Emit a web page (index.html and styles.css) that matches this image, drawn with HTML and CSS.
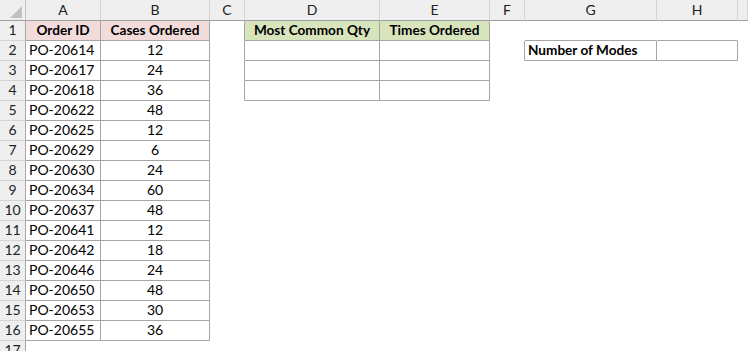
FILE: index.html
```html
<!DOCTYPE html>
<html>
<head>
<meta charset="utf-8">
<link rel="stylesheet" href="styles.css">
</head>
<body>
<div class="sheet">
  <div class="row hdr">
    <div class="corner"><span class="tri"></span></div>
    <div class="ch">A</div><div class="ch">B</div><div class="ch">C</div><div class="ch">D</div><div class="ch">E</div><div class="ch">F</div><div class="ch">G</div><div class="ch">H</div><div class="ch"></div>
  </div>
  <div class="row">
    <div class="rh">1</div>
    <div class="c r b pink hd">Order ID</div><div class="c r b pink hd">Cases Ordered</div><div class="c r"></div>
    <div class="c r b green hd">Most Common Qty</div><div class="c r b green hd">Times Ordered</div><div class="c"></div>
    <div class="c b"></div><div class="c b"></div><div class="c"></div>
  </div>
  <div class="row">
    <div class="rh">2</div>
    <div class="c r b txt">PO-20614</div><div class="c r b num">12</div><div class="c r"></div>
    <div class="c r b"></div><div class="c r b"></div><div class="c r"></div>
    <div class="c r b hd lbl">Number of Modes</div><div class="c r b"></div><div class="c"></div>
  </div>
  <div class="row">
    <div class="rh">3</div>
    <div class="c r b txt">PO-20617</div><div class="c r b num">24</div><div class="c r"></div>
    <div class="c r b"></div><div class="c r b"></div><div class="c"></div>
    <div class="c"></div><div class="c"></div><div class="c"></div>
  </div>
  <div class="row">
    <div class="rh">4</div>
    <div class="c r b txt">PO-20618</div><div class="c r b num">36</div><div class="c r"></div>
    <div class="c r b"></div><div class="c r b"></div><div class="c"></div>
    <div class="c"></div><div class="c"></div><div class="c"></div>
  </div>
  <div class="row">
    <div class="rh">5</div>
    <div class="c r b txt">PO-20622</div><div class="c r b num">48</div><div class="c"></div>
    <div class="c"></div><div class="c"></div><div class="c"></div><div class="c"></div><div class="c"></div><div class="c"></div>
  </div>
  <div class="row">
    <div class="rh">6</div>
    <div class="c r b txt">PO-20625</div><div class="c r b num">12</div><div class="c"></div>
    <div class="c"></div><div class="c"></div><div class="c"></div><div class="c"></div><div class="c"></div><div class="c"></div>
  </div>
  <div class="row">
    <div class="rh">7</div>
    <div class="c r b txt">PO-20629</div><div class="c r b num">6</div><div class="c"></div>
    <div class="c"></div><div class="c"></div><div class="c"></div><div class="c"></div><div class="c"></div><div class="c"></div>
  </div>
  <div class="row">
    <div class="rh">8</div>
    <div class="c r b txt">PO-20630</div><div class="c r b num">24</div><div class="c"></div>
    <div class="c"></div><div class="c"></div><div class="c"></div><div class="c"></div><div class="c"></div><div class="c"></div>
  </div>
  <div class="row">
    <div class="rh">9</div>
    <div class="c r b txt">PO-20634</div><div class="c r b num">60</div><div class="c"></div>
    <div class="c"></div><div class="c"></div><div class="c"></div><div class="c"></div><div class="c"></div><div class="c"></div>
  </div>
  <div class="row">
    <div class="rh">10</div>
    <div class="c r b txt">PO-20637</div><div class="c r b num">48</div><div class="c"></div>
    <div class="c"></div><div class="c"></div><div class="c"></div><div class="c"></div><div class="c"></div><div class="c"></div>
  </div>
  <div class="row">
    <div class="rh">11</div>
    <div class="c r b txt">PO-20641</div><div class="c r b num">12</div><div class="c"></div>
    <div class="c"></div><div class="c"></div><div class="c"></div><div class="c"></div><div class="c"></div><div class="c"></div>
  </div>
  <div class="row">
    <div class="rh">12</div>
    <div class="c r b txt">PO-20642</div><div class="c r b num">18</div><div class="c"></div>
    <div class="c"></div><div class="c"></div><div class="c"></div><div class="c"></div><div class="c"></div><div class="c"></div>
  </div>
  <div class="row">
    <div class="rh">13</div>
    <div class="c r b txt">PO-20646</div><div class="c r b num">24</div><div class="c"></div>
    <div class="c"></div><div class="c"></div><div class="c"></div><div class="c"></div><div class="c"></div><div class="c"></div>
  </div>
  <div class="row">
    <div class="rh">14</div>
    <div class="c r b txt">PO-20650</div><div class="c r b num">48</div><div class="c"></div>
    <div class="c"></div><div class="c"></div><div class="c"></div><div class="c"></div><div class="c"></div><div class="c"></div>
  </div>
  <div class="row">
    <div class="rh">15</div>
    <div class="c r b txt">PO-20653</div><div class="c r b num">30</div><div class="c"></div>
    <div class="c"></div><div class="c"></div><div class="c"></div><div class="c"></div><div class="c"></div><div class="c"></div>
  </div>
  <div class="row">
    <div class="rh">16</div>
    <div class="c r b txt">PO-20655</div><div class="c r b num">36</div><div class="c"></div>
    <div class="c"></div><div class="c"></div><div class="c"></div><div class="c"></div><div class="c"></div><div class="c"></div>
  </div>
  <div class="row">
    <div class="rh">17</div>
    <div class="c"></div><div class="c"></div><div class="c"></div>
    <div class="c"></div><div class="c"></div><div class="c"></div><div class="c"></div><div class="c"></div><div class="c"></div>
  </div>
</div>
</body>
</html>
```
FILE: styles.css
```css
* { box-sizing: border-box; }
html, body { margin: 0; padding: 0; background: #ffffff; }
body {
  width: 748px;
  height: 351px;
  overflow: hidden;
  font-family: "Lato", "Liberation Sans", sans-serif;
  font-size: 14px;
  color: #000;
}
.sheet { display: flex; flex-direction: column; }
.row {
  display: grid;
  grid-template-columns: 26px 75px 109px 35px 135px 110px 35px 132px 81px 1fr;
  height: 20px;
}
.hdr { height: 21px; }
.hdr > div {
  background: #efefef;
  border-right: 1px solid #d4d4d4;
  border-bottom: 1px solid #9f9f9f;
  display: flex;
  align-items: flex-end;
  justify-content: center;
  padding-bottom: 2px;
  color: #222;
  font-size: 14px;
}
.corner { position: relative; }
.hdr > .corner { border-right-color: #c6c6c6; }
.tri {
  position: absolute;
  left: 10px;
  top: 6px;
  width: 0;
  height: 0;
  border-style: solid;
  border-width: 0 0 12px 12px;
  border-color: transparent transparent #c0c0c0 transparent;
}
.rh {
  background: #efefef;
  border-right: 1px solid #a9a9a9;
  border-bottom: 1px solid #d4d4d4;
  display: flex;
  align-items: flex-end;
  justify-content: center;
  padding-bottom: 2px;
  color: #222;
  font-size: 14px;
}
.c {
  border-right: 1px solid transparent;
  border-bottom: 1px solid transparent;
  display: flex;
  align-items: flex-end;
  padding-bottom: 2px;
  white-space: nowrap;
  overflow: hidden;
}
.c.r { border-right-color: #a5a5a5; }
.c.b { border-bottom-color: #a5a5a5; }
.pink { background: #f2dcdb; }
.green { background: #d8e4bc; }
.hd { font-weight: 700; justify-content: center; font-size: 13.6px; }
.lbl { justify-content: flex-start; padding-left: 3px; }
.txt { padding-left: 3px; }
.num { justify-content: center; }
```
